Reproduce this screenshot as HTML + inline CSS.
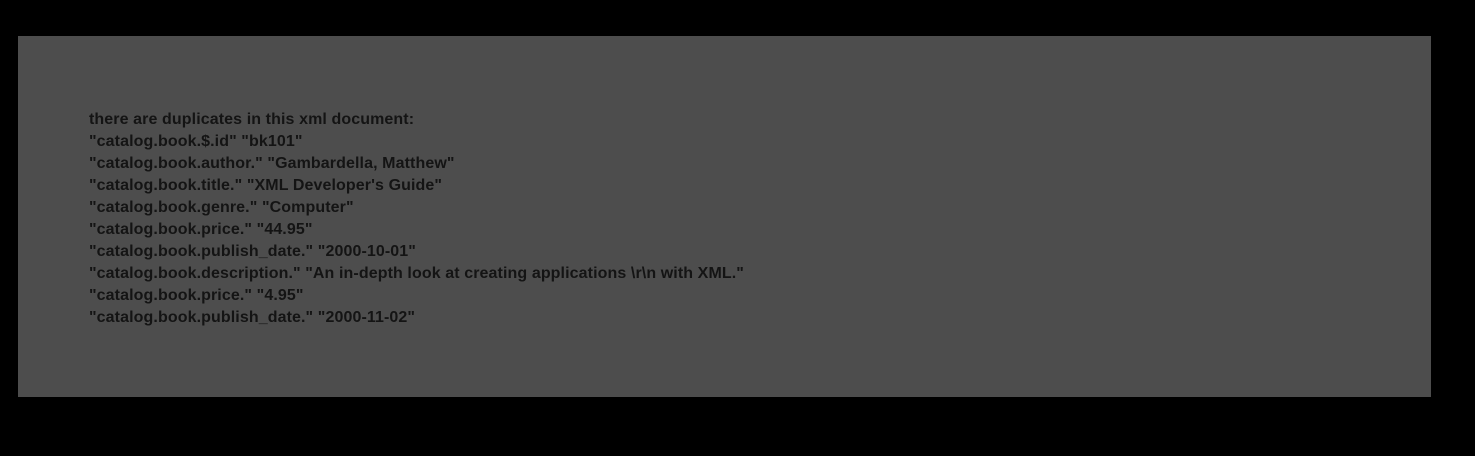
<!DOCTYPE html>
<html><head><style>
html,body{margin:0;padding:0;background:#000;width:1475px;height:456px;overflow:hidden}
.p{position:absolute;left:18px;top:36px;width:1413px;height:361px;background:#4d4d4d}
.t{position:absolute;left:71px;top:73px;font-family:"Liberation Sans",sans-serif;font-weight:bold;font-size:16px;letter-spacing:0.1px;line-height:22px;color:#141414;white-space:pre}
</style></head><body>
<div class="p"><div class="t">there are duplicates in this xml document:
"catalog.book.$.id" "bk101"
"catalog.book.author." "Gambardella, Matthew"
"catalog.book.title." "XML Developer's Guide"
"catalog.book.genre." "Computer"
"catalog.book.price." "44.95"
"catalog.book.publish_date." "2000-10-01"
"catalog.book.description." "An in-depth look at creating applications \r\n with XML."
"catalog.book.price." "4.95"
"catalog.book.publish_date." "2000-11-02"</div></div>
</body></html>
